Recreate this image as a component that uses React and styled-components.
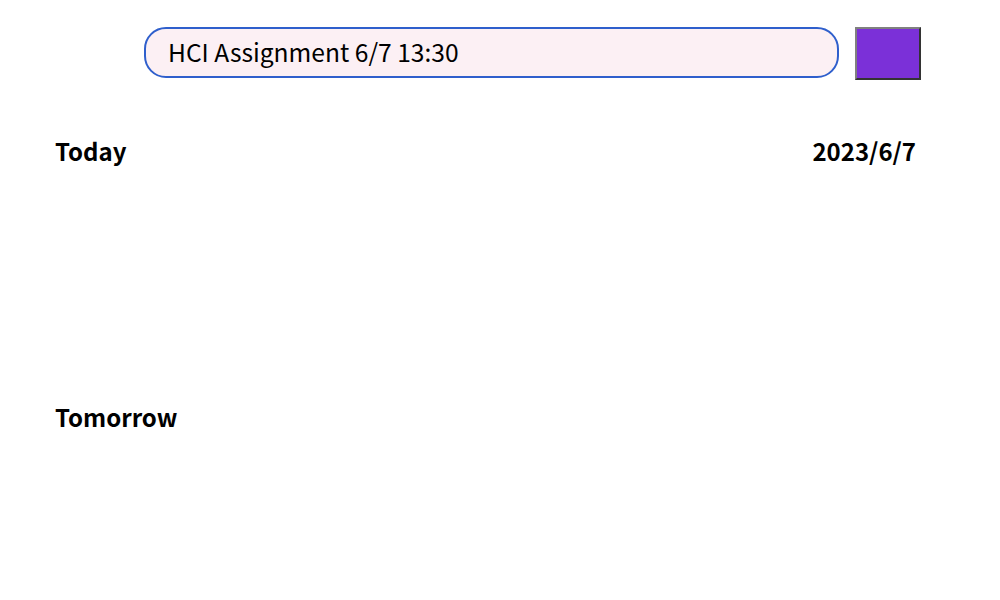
import React from "react";
import styled, { createGlobalStyle } from "styled-components";

const Global = createGlobalStyle`
  html, body { margin: 0; padding: 0; background: #fff; }
  body { font-family: "Noto Sans CJK KR", "Noto Sans", sans-serif; color: #000; }
`;

const Page = styled.div`
  width: 1000px;
  height: 600px;
  box-sizing: border-box;
  padding: 27px 0 0 0;
`;

const Bar = styled.div`
  display: flex;
  align-items: flex-start;
  gap: 16px;
  padding-left: 144px;
`;

const Field = styled.input`
  box-sizing: border-box;
  width: 695px;
  height: 51px;
  border: 2px solid #2f5fcc;
  border-radius: 22px;
  background: #fcf0f4;
  padding: 0 0 3px 22px;
  font-family: inherit;
  font-size: 24.6px;
  color: #000;
  outline: none;
`;

const AddButton = styled.button`
  box-sizing: border-box;
  width: 66px;
  height: 53px;
  background: #7b30d8;
  border: 2px solid #808080;
  border-right-color: #333;
  border-bottom-color: #333;
  padding: 0;
`;

const Section = styled.section`
  display: flex;
  justify-content: space-between;
  align-items: baseline;
  padding: 0 84px 0 55px;
  margin-top: ${(p) => p.$top}px;
`;

const Heading = styled.h2`
  margin: 0;
  font-size: 24px;
  font-weight: 700;
  line-height: 30px;
`;

export default function App() {
  return (
    <Page>
      <Global />
      <Bar>
        <Field defaultValue="HCI Assignment 6/7 13:30" />
        <AddButton aria-label="add" />
      </Bar>
      <Section $top={56}>
        <Heading>Today</Heading>
        <Heading>2023/6/7</Heading>
      </Section>
      <Section $top={236}>
        <Heading>Tomorrow</Heading>
      </Section>
    </Page>
  );
}
